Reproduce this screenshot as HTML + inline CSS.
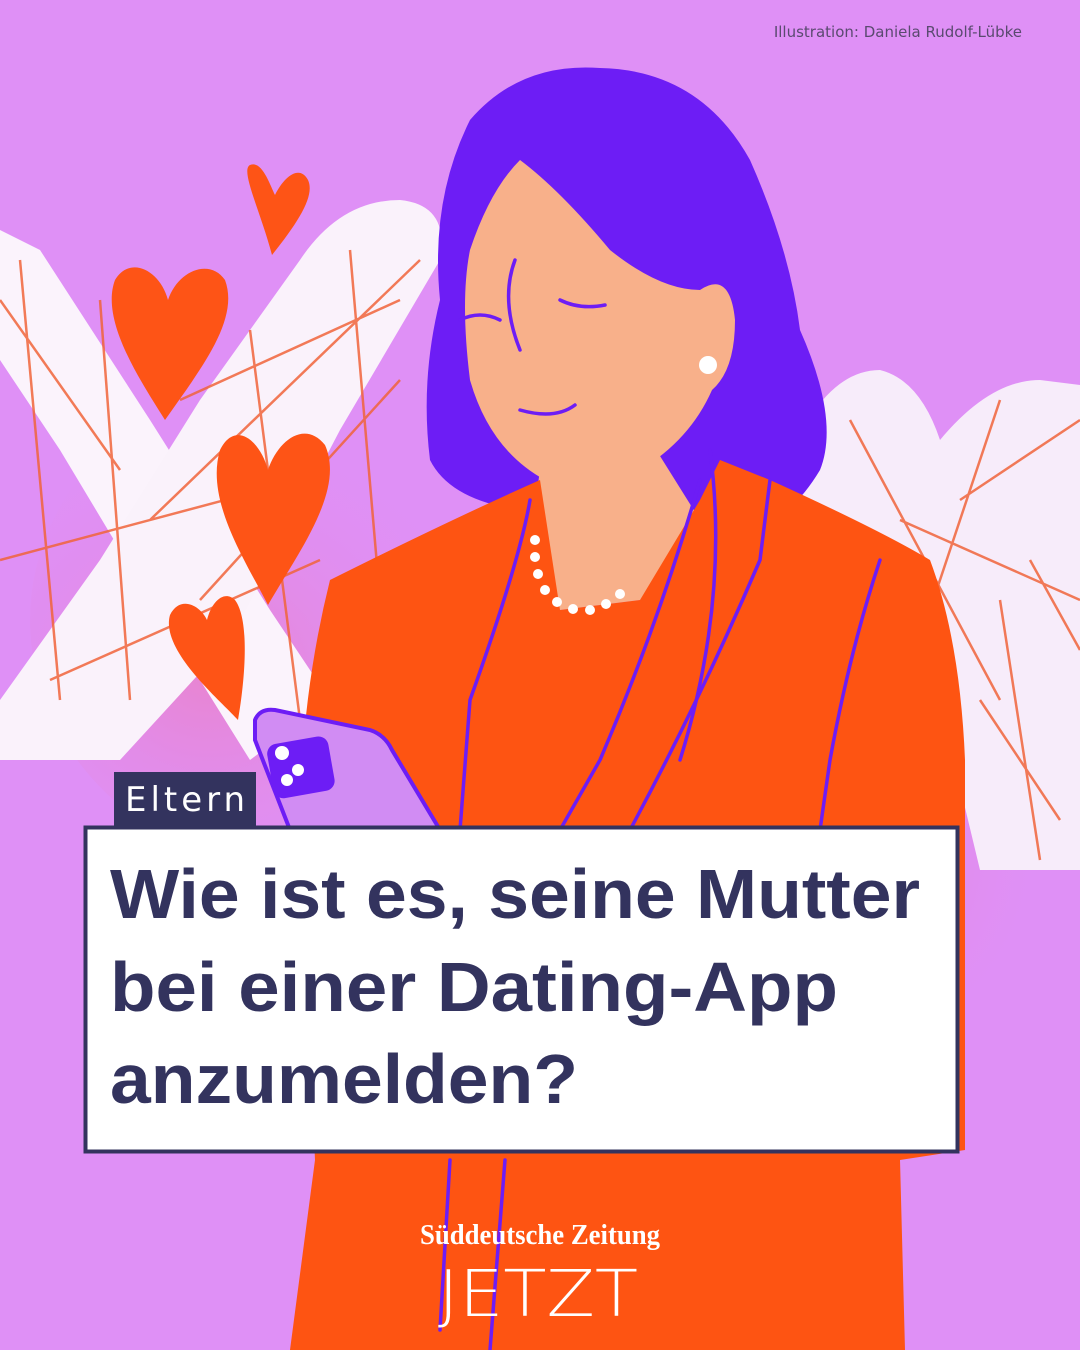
<!DOCTYPE html>
<html><head><meta charset="utf-8"><style>
html,body{margin:0;padding:0;width:1080px;height:1350px;overflow:hidden;background:#df90f6}
svg{display:block}
</style></head><body>
<svg width="1080" height="1350" viewBox="0 0 1080 1350" xmlns="http://www.w3.org/2000/svg">
<defs>
<radialGradient id="pk" cx="0.3" cy="0.6" r="0.5"><stop offset="0" stop-color="#f07ab0" stop-opacity="0.55"/><stop offset="1" stop-color="#df90f6" stop-opacity="0"/></radialGradient>
</defs>
<rect width="1080" height="1350" fill="#df90f6"/>
<ellipse cx="330" cy="620" rx="300" ry="260" fill="url(#pk)"/>
<ellipse cx="930" cy="820" rx="200" ry="200" fill="url(#pk)"/>
<path d="M0 230 L40 250 L150 420 L270 610 L330 700 L250 760 L150 600 L60 450 L0 360 Z" fill="#fbf3fc"/>
<path d="M400 200 Q450 205 440 260 L340 430 L230 640 L120 760 L0 760 L0 700 L100 560 L200 400 L300 260 Q340 200 400 200 Z" fill="#faf2fb"/>
<path d="M780 480 Q820 370 880 370 Q920 380 940 440 Q990 380 1040 380 L1080 385 L1080 870 L980 870 L920 620 Z" fill="#f7ecfa"/>
<g stroke="#f0643a" stroke-width="2.5" fill="none" opacity="0.85">
<path d="M0 300 L120 470 M20 260 L60 700 M100 300 L130 700 M180 400 L400 300 M150 520 L420 260 M200 600 L400 380 M250 330 L300 720 M0 560 L300 480 M50 680 L320 560 M350 250 L380 600"/>
<path d="M850 420 L1000 700 M1000 400 L900 700 M960 500 L1080 420 M1030 560 L1080 650 M900 520 L1080 600 M980 700 L1060 820 M1000 600 L1040 860"/>
</g>
<g fill="#fe5416">
<path d="M272 255 C260 210 240 170 250 165 C262 160 270 185 275 195 C285 175 300 165 308 180 C315 195 300 220 272 255Z"/>
<path d="M165 420 C140 380 100 320 115 280 C130 255 160 270 168 300 C178 270 210 258 225 280 C240 320 200 370 165 420Z"/>
<path d="M268 605 C245 560 205 500 220 450 C235 420 260 440 268 470 C278 440 305 420 325 445 C345 490 300 550 268 605Z"/>
<path d="M238 720 C220 700 160 650 170 615 C180 595 200 605 207 620 C212 600 225 590 235 600 C250 620 245 680 238 720Z"/>
</g>
<path d="M470 120 Q520 62 600 68 Q700 70 750 160 Q790 250 800 330 Q840 420 820 470 Q790 520 750 530 L520 510 Q450 500 430 460 Q420 380 440 300 Q430 200 470 120Z" fill="#6d1df5"/>
<path d="M520 160 Q560 190 610 250 Q660 290 700 290 Q730 270 735 320 Q735 370 712 390 Q690 440 640 470 Q590 500 545 480 Q490 450 470 380 Q460 300 470 250 Q490 190 520 160Z" fill="#f8b08a"/>
<path d="M540 470 L650 440 L700 520 L640 600 L560 610 L530 540Z" fill="#f8b08a"/>
<path d="M330 580 Q450 520 540 480 L560 610 L640 600 L700 500 L720 460 L770 480 Q880 530 930 560 Q960 640 965 760 L965 1150 L900 1160 L905 1350 L290 1350 L315 1160 L300 830 Q300 700 330 580Z" fill="#fe5412"/>
<g stroke="#6d1df5" stroke-width="3.5" fill="none" stroke-linecap="round">
<path d="M530 500 Q520 560 470 700 L460 830"/>
<path d="M700 480 Q660 620 600 760 L560 830"/>
<path d="M710 450 Q730 600 680 760"/>
<path d="M770 480 L760 560 Q700 700 630 830"/>
<path d="M880 560 Q850 650 830 760 L820 830"/>
<path d="M520 410 Q555 420 575 405"/>
<path d="M460 320 Q480 310 500 320 M560 300 Q580 310 605 305"/>
<path d="M515 260 Q500 300 520 350"/>
<path d="M450 1160 L440 1330 M505 1160 L490 1350"/>
</g>
<g fill="#fff">
<circle cx="535" cy="540" r="5"/><circle cx="535" cy="557" r="5"/><circle cx="538" cy="574" r="5"/><circle cx="545" cy="590" r="5"/><circle cx="557" cy="602" r="5"/><circle cx="573" cy="609" r="5"/><circle cx="590" cy="610" r="5"/><circle cx="606" cy="604" r="5"/><circle cx="620" cy="594" r="5"/><circle cx="708" cy="365" r="9"/>
</g>
<path d="M255 720 Q260 708 275 710 L370 730 Q385 735 392 750 L440 830 L290 830 L255 740Z" fill="#d18cf3" stroke="#6d1df5" stroke-width="4"/>
<rect x="270" y="740" width="62" height="55" rx="10" fill="#6d1df5" transform="rotate(-10 300 768)"/>
<circle cx="282" cy="753" r="7" fill="#fff"/><circle cx="298" cy="770" r="6" fill="#fff"/><circle cx="287" cy="780" r="6" fill="#fff"/>
<text x="1022" y="37" text-anchor="end" font-family="DejaVu Sans, sans-serif" font-size="15" fill="#5a4a70">Illustration: Daniela Rudolf-Lübke</text>
<rect x="114" y="772" width="142" height="56" fill="#33335e"/>
<text x="125" y="811" font-family="DejaVu Sans, sans-serif" font-size="34" fill="#fff" textLength="120" lengthAdjust="spacing">Eltern</text>
<rect x="85.5" y="827.5" width="872" height="324" fill="#fff" stroke="#33335e" stroke-width="4"/>
<g font-family="Liberation Sans, sans-serif" font-weight="bold" font-size="70" fill="#33335e">
<text x="110" y="918" textLength="810" lengthAdjust="spacingAndGlyphs">Wie ist es, seine Mutter</text>
<text x="110" y="1011" textLength="728" lengthAdjust="spacingAndGlyphs">bei einer Dating-App</text>
<text x="110" y="1103" textLength="468" lengthAdjust="spacingAndGlyphs">anzumelden?</text>
</g>
<text x="540" y="1244" text-anchor="middle" font-family="Liberation Serif, serif" font-weight="bold" font-size="28" fill="#fff" textLength="240" lengthAdjust="spacingAndGlyphs">Süddeutsche Zeitung</text>
<text x="538" y="1316" text-anchor="middle" font-family="DejaVu Sans, sans-serif" font-weight="200" font-size="64" fill="#fff" textLength="200" lengthAdjust="spacingAndGlyphs">JETZT</text>
</svg>
</body></html>
